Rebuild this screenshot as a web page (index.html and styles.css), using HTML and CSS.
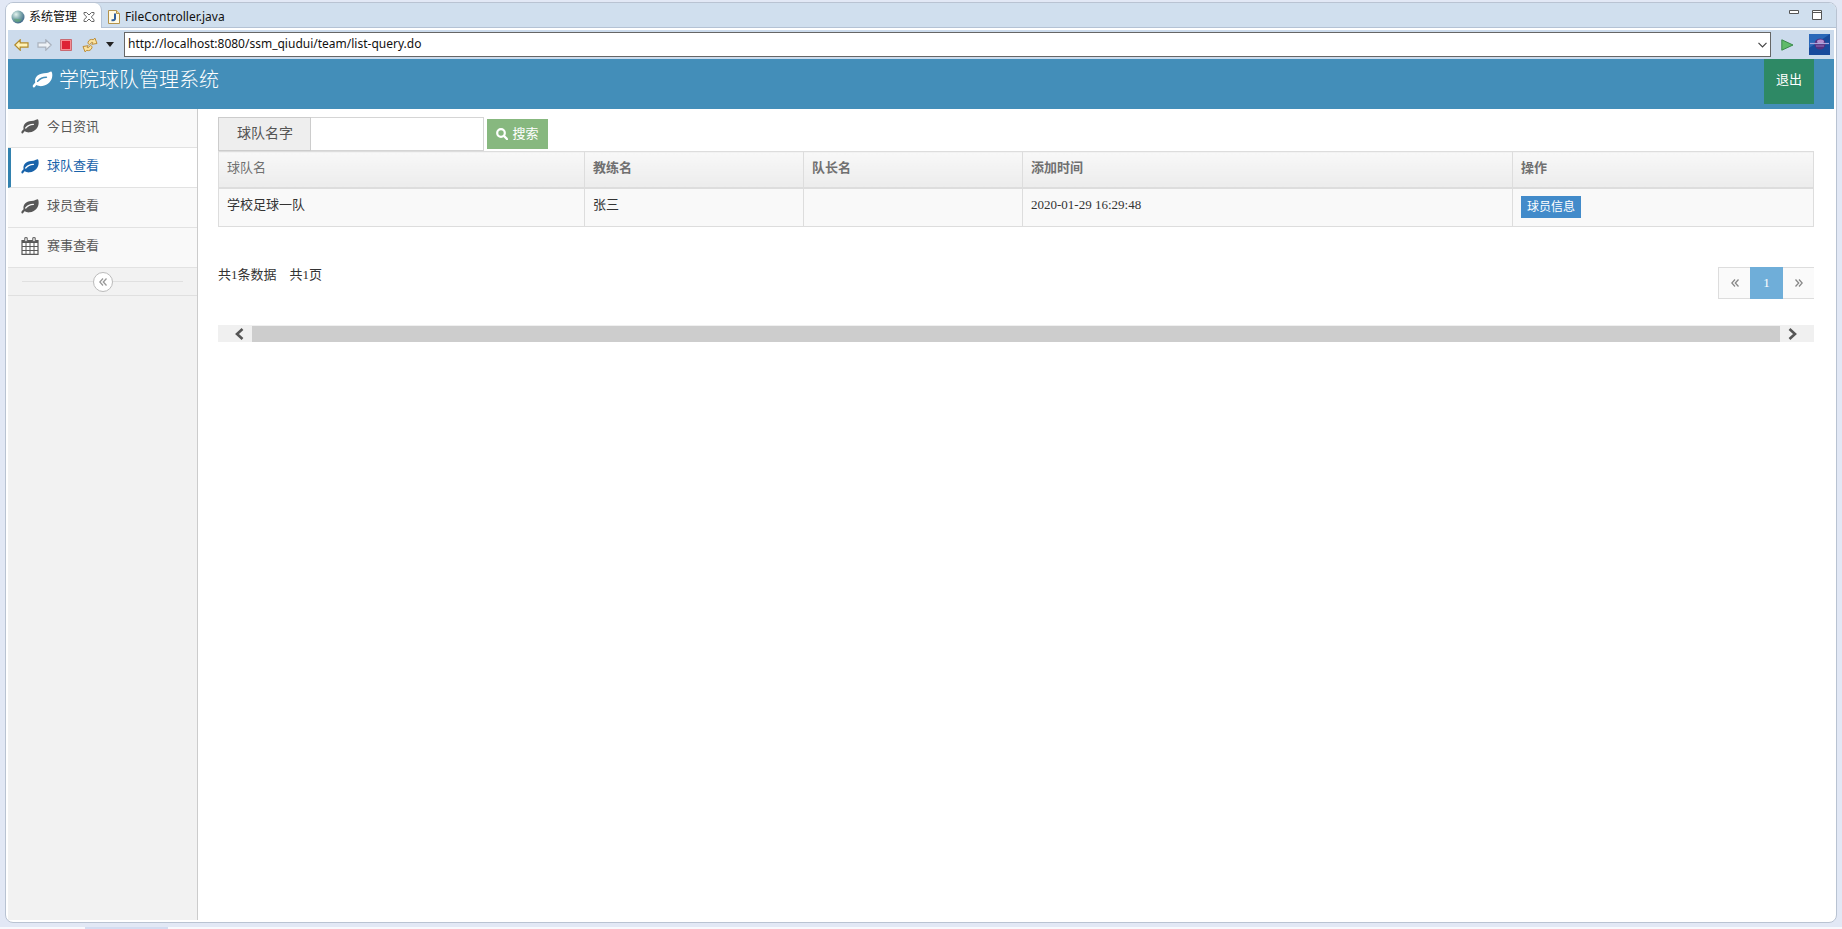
FILE: index.html
```html
<!DOCTYPE html>
<html lang="zh-CN">
<head>
<meta charset="utf-8">
<title>系统管理</title>
<link rel="stylesheet" href="styles.css">
</head>
<body>
<svg class="defs" aria-hidden="true">
  <symbol id="leaf" viewBox="0 0 20 17">
    <path fill="currentColor" fill-rule="evenodd" d="M18.800.400C17.500.200 16.500 1.600 14 1.900 10.500 2.300 7.200 2.400 4.700 4.700 2.800 6.500 2.200 8.600 2.700 11.700 1.600 12.900.200 13.900.200 15.200c.200.800.9 1.400 1.500 1.200.9-.3 1.200-1.600 2.200-2.400 1.600.9 3.700 1.400 5.900 1.100C15.600 14.300 19.500 10 19.800 4.800 19.900 3 19.600 1 18.800.400ZM13.800 6.900c-3.700.1-5.700 1.400-8.100 3.900-.8.700-1.800-.2-1.100-1.100 2.700-3 5.300-4.300 9.200-4.300 1.200 0 1.200 1.500 0 1.500Z"/>
  </symbol>
  <symbol id="laquo" viewBox="0 0 8 8">
    <path fill="none" stroke="currentColor" stroke-width="1.300" d="M4 .5.800 4 4 7.500M7.500.5 4.300 4l3.200 3.500"/>
  </symbol>
</svg>
<div class="window">
  <div class="tabs">
    <div class="tab tab-active">
      <svg width="14" height="14" viewBox="0 0 14 14"><defs><radialGradient id="g" cx=".35" cy=".3" r=".75"><stop offset="0" stop-color="#e4f3ee"/><stop offset=".5" stop-color="#7fa9ad"/><stop offset="1" stop-color="#3b6487"/></radialGradient></defs><circle cx="7" cy="7" r="6.500" fill="url(#g)"/><path d="M3 9c3-1 5 1 8 0-1 2-3 3.500-5 3S3.500 11 3 9Z" fill="#5fa577" opacity=".7"/></svg>
      <span>系统管理</span>
      <button class="close" aria-label="关闭"><svg width="12" height="12" viewBox="0 0 12 12"><path fill="#fff" stroke="#666" d="M1 1.500h2.500L6 4l2.500-2.500H11v1.800L8.200 6 11 8.700v1.800H8.500L6 8l-2.500 2.500H1V8.700L3.800 6 1 3.300Z"/></svg></button>
    </div>
    <div class="tab">
      <svg width="12" height="14" viewBox="0 0 12 14"><path d="M.5.500h8l3 3v10H.5Z" fill="#fffbe8" stroke="#b3924a"/><path d="M8.500.500v3h3" fill="#f1d795" stroke="#b3924a"/><path d="M7 3.500v5.200Q7 10.500 3.500 10.300" fill="none" stroke="#2f5f9e" stroke-width="2"/></svg>
      <span>FileController.java</span>
    </div>
    <div class="window-tools">
      <button aria-label="最小化"><svg width="10" height="12" viewBox="0 0 10 12"><path d="M.5 2.500h9v3h-9Z" fill="#fff" stroke="#555"/></svg></button>
      <button aria-label="最大化"><svg width="10" height="12" viewBox="0 0 10 12"><path d="M.5 2.500h9v9h-9ZM.5 4.500h9" fill="#fff" stroke="#555"/></svg></button>
    </div>
  </div>

  <div class="toolbar">
    <button aria-label="后退"><svg width="15" height="12" viewBox="0 0 15 12"><path d="M.8 6 6.200.800v3H14v4.400H6.200v3Z" fill="#fff3b8" stroke="#b28a2c" stroke-width="1.200"/></svg></button>
    <button aria-label="前进"><svg width="15" height="12" viewBox="0 0 15 12"><path d="M14.200 6 8.800.800v3H1v4.400h7.800v3Z" fill="#eef2f6" stroke="#a9b1bd" stroke-width="1.200"/></svg></button>
    <button aria-label="停止"><svg width="12" height="12" viewBox="0 0 12 12"><path d="M.5.500h11v11H.5Z" fill="#f58f96" stroke="#c96a72"/><path d="M2 2h8v8H2Z" fill="#de2236"/></svg></button>
    <button aria-label="刷新"><svg width="16" height="16" viewBox="0 0 16 16"><g fill="#fbe3a0" stroke="#bd8d36"><path d="M6 5.500C6.500 3 9 1.800 11.200 2.700L13 1.200 15 6.500 9.800 7.300 10.800 5.500C9.800 5 8.800 5.500 8.500 6.700 8 8 6 7.500 6 5.500Z"/><path d="M10 10.500C9.500 13 7 14.200 4.800 13.300L3 14.800 1 9.500 6.200 8.700 5.200 10.500C6.200 11 7.200 10.500 7.500 9.300 8 8 10 8.500 10 10.500Z"/></g></svg></button>
    <button class="drop" aria-label="更多"><svg width="8" height="5" viewBox="0 0 8 5"><path d="M0 0h8L4 5Z" fill="#222"/></svg></button>
    <div class="address">
      <input type="text" aria-label="地址" value="http://localhost:8080/ssm_qiudui/team/list-query.do">
      <button aria-label="历史记录"><svg width="9" height="6" viewBox="0 0 9 6"><path d="M.5.800l4 4 4-4" fill="none" stroke="#444" stroke-width="1.200"/></svg></button>
    </div>
    <button class="go" aria-label="转到"><svg width="13" height="12" viewBox="0 0 13 12"><path d="M.8.800 12 6 .8 11.200Z" fill="#5fbb69" stroke="#3a8a4c"/></svg></button>
    <svg class="brand" width="21" height="21" viewBox="0 0 21 21"><path d="M0 0h21v21H0Z" fill="#184a9c"/><path d="M0 0h21L0 14Z" fill="#2a67b8"/><circle cx="11" cy="10" r="5.500" fill="#56307f"/><ellipse cx="11.500" cy="7.500" rx="3.500" ry="2" fill="#b58fd0"/><path d="M1 9.500h19" stroke="#aaa7de" stroke-width="1.200"/><path d="M7 12h8" stroke="#9573bd"/></svg>
  </div>

  <header class="header">
    <div class="logo"><svg width="21" height="17"><use href="#leaf"/></svg><span>学院球队管理系统</span></div>
    <a class="logout" href="#">退出</a>
  </header>

  <div class="body">
    <aside class="sidebar">
      <nav>
        <a href="#"><svg width="18" height="15"><use href="#leaf"/></svg>今日资讯</a>
        <a href="#" class="active" aria-current="page"><svg width="18" height="15"><use href="#leaf"/></svg>球队查看</a>
        <a href="#"><svg width="18" height="15"><use href="#leaf"/></svg>球员查看</a>
        <a href="#"><svg width="18" height="18" viewBox="0 0 18 18"><path fill="#fff" stroke="currentColor" stroke-width="1.200" d="M1 3.500h16v13.800H1Z"/><path fill="none" stroke="currentColor" d="M1 9.500h16M1 13.500h16M5 6v11M9 6v11M13 6v11"/><path fill="currentColor" d="M1 3h16v3H1Z"/><path fill="#f9f9f9" stroke="currentColor" d="M3.800.700h2.400v4H3.800ZM11.800.700h2.400v4h-2.400Z"/></svg>赛事查看</a>
      </nav>
      <div class="collapse"><button aria-label="折叠菜单"><svg width="8" height="8"><use href="#laquo"/></svg></button></div>
    </aside>

    <main class="content">
      <form class="search">
        <label for="team">球队名字</label>
        <input id="team" type="text">
        <button type="button"><svg width="12" height="12" viewBox="0 0 12 12"><circle cx="5" cy="5" r="3.800" fill="none" stroke="#fff" stroke-width="2.200"/><path d="m8 8 3 3" stroke="#fff" stroke-width="2.400" stroke-linecap="round"/></svg>搜索</button>
      </form>
      <table>
        <colgroup><col class="c-team"><col class="c-person"><col class="c-person"><col class="c-time"><col></colgroup>
        <thead><tr><th class="plain">球队名</th><th>教练名</th><th>队长名</th><th>添加时间</th><th>操作</th></tr></thead>
        <tbody><tr><td>学校足球一队</td><td>张三</td><td></td><td>2020-01-29 16:29:48</td><td><a class="badge" href="#">球员信息</a></td></tr></tbody>
      </table>
      <div class="summary">
        <p><span>共1条数据</span><span>共1页</span></p>
        <nav class="pager" aria-label="分页">
          <a href="#" aria-label="上一页"><svg width="8" height="8"><use href="#laquo"/></svg></a>
          <a href="#" class="current" aria-current="page">1</a>
          <a href="#" aria-label="下一页"><svg class="flip" width="8" height="8"><use href="#laquo"/></svg></a>
        </nav>
      </div>
      <div class="scroll">
        <button aria-label="向左滚动"><svg width="10" height="12" viewBox="0 0 10 12"><path d="M8.500 1 3 6l5.500 5" fill="none" stroke="#555" stroke-width="2.600"/></svg></button>
        <div class="thumb"></div>
        <button aria-label="向右滚动"><svg class="flip" width="10" height="12" viewBox="0 0 10 12"><path d="M8.500 1 3 6l5.500 5" fill="none" stroke="#555" stroke-width="2.600"/></svg></button>
      </div>
    </main>
  </div>
</div>
<div class="status"><span></span></div>
</body>
</html>
```

FILE: styles.css
```css
* { box-sizing: border-box; }
html, body { height: 100%; }
body {
  margin: 0;
  padding: 2px 5px 0;
  display: flex;
  flex-direction: column;
  background: #e2e8f5;
  color: #333;
  font: 13px/20px "Liberation Serif", "Noto Sans CJK SC", serif;
}
button { padding: 0; border: 0; background: none; font: inherit; color: inherit; display: inline-flex; align-items: center; justify-content: center; }
a { color: inherit; text-decoration: none; }
svg { display: block; flex: none; }
.defs { position: absolute; width: 0; height: 0; }
.flip { transform: scaleX(-1); }

.window {
  flex: 1;
  display: flex;
  flex-direction: column;
  border: 1px solid #b9c3d2;
  border-radius: 8px;
  background: #fff;
  padding: 0 2px 2px;
}
.tabs {
  display: flex;
  height: 25px;
  margin: 0 -2px 2px;
  background: #d0dfee;
  border-bottom: 1px solid #b4c2d4;
  border-radius: 7px 7px 0 0;
  color: #111;
  font: 12px/24px "Noto Sans", "Noto Sans CJK SC", sans-serif;
}
.tab { display: flex; align-items: center; gap: 5px; padding: 2px 6px 0; height: 25px; }
.tab-active { gap: 4px; background: #fff; border-right: 1px solid #b4c2d4; border-radius: 7px 7px 0 0; padding-left: 5px; }
.close { margin-left: 2px; }
.window-tools { margin: 5px 14px 0 auto; display: flex; align-items: flex-start; gap: 13px; }

.toolbar { display: flex; align-items: center; height: 29px; padding: 0 4px 0 6px; background: #ccdbec; }
.toolbar > button { margin-right: 8px; }
.toolbar > button:nth-child(3) { margin-right: 10px; }
.toolbar > .drop { margin-right: 10px; }
.address { flex: 1; display: flex; height: 25px; border: 1px solid #666; background: #fff; }
.address input { flex: 1; min-width: 0; border: 0; padding: 0 3px 1px; background: none; color: #111; font: 12px/22px "Noto Sans", sans-serif; }
.address button { width: 16px; }
.toolbar > .go { margin: 0 15px 0 10px; }

.header { display: flex; justify-content: space-between; align-items: flex-start; height: 50px; padding: 0 20px 0 24px; background: #438eb9; color: #fff; }
.logo { display: flex; align-items: center; gap: 6px; height: 41px; font-size: 20px; font-weight: 300; }
.logout { width: 50px; height: 45px; background: #2e8965; text-align: center; line-height: 42px; }

.body { flex: 1; display: flex; }
.sidebar { width: 190px; background: #f2f2f2; border-right: 1px solid #ccc; }
.sidebar nav a {
  display: flex;
  align-items: center;
  gap: 8px;
  height: 40px;
  padding: 0 0 3px 13px;
  background: #f9f9f9;
  border-bottom: 1px solid #e2e2e2;
  color: #585858;
}
.sidebar nav a:first-child { height: 39px; }
.sidebar nav a.active { padding-left: 10px; border-left: 3px solid #3382af; background: #fff; color: #1963aa; }
.collapse { display: flex; align-items: center; height: 28px; padding: 0 14px; border-bottom: 1px solid #e0e0e0; }
.collapse::before, .collapse::after { content: ""; flex: 1; border-top: 1px solid #e0e0e0; }
.collapse button { width: 20px; height: 20px; border: 1px solid #bbb; border-radius: 50%; background: #fff; color: #999; }

.content { flex: 1; min-width: 0; padding: 8px 20px; }
.search { display: flex; align-items: center; height: 34px; }
.search label { height: 34px; padding: 0 17px 0 18px; border: 1px solid #ccc; background: #eee; color: #555; font-size: 14px; line-height: 31px; }
.search input { width: 173px; height: 34px; border: 1px solid #d5d5d5; border-left: 0; padding: 0 6px; font: inherit; }
.search button { gap: 4px; width: 61px; height: 30px; margin-left: 3px; background: #87b87f; color: #fff; line-height: 18px; }

table { width: 100%; table-layout: fixed; border-collapse: collapse; }
.c-team { width: 23%; }
.c-person { width: 219px; }
.c-team { width: 366px; }
.c-time { width: 490px; }
th, td { border: 1px solid #ddd; padding: 8px; text-align: left; vertical-align: top; }
th { height: 36px; padding: 7px 8px; border-bottom-width: 2px; background: linear-gradient(#f8f8f8, #ececec); color: #707070; line-height: 18px; }
td { height: 39px; padding: 7px 8px; background: #f9f9f9; line-height: 18px; }
.plain { font-weight: 400; }
.badge { display: inline-block; padding: 0 6px; background: #428bca; color: #fff; font-size: 12px; line-height: 22px; }

.summary { display: flex; justify-content: space-between; align-items: flex-start; margin-top: 40px; }
.summary p { display: flex; gap: 13px; margin: 0; line-height: 16px; }
.pager { display: flex; height: 32px; border: 1px solid #ddd; border-right: 0; background: #fafafa; color: #888; }
.pager a { width: 31px; display: flex; align-items: center; justify-content: center; }
.pager .current { width: 33px; margin: -1px 0; background: #6faed9; color: #fff; }

.scroll { display: flex; align-items: center; height: 17px; margin-top: 26px; background: #f0f0f0; }
.scroll button { width: 34px; height: 17px; }
.scroll button:first-child { padding-left: 8px; }
.scroll button:last-child { padding-right: 8px; }
.thumb { flex: 1; height: 16px; background: #cdcdcd; }

.status { height: 6px; margin: 0 -5px; padding-left: 85px; background: linear-gradient(#e2e8f5 4px, #f7f9fd 4px); }
.status span { display: block; width: 83px; height: 2px; margin-top: 4px; background: #d3dcf0; }
```
